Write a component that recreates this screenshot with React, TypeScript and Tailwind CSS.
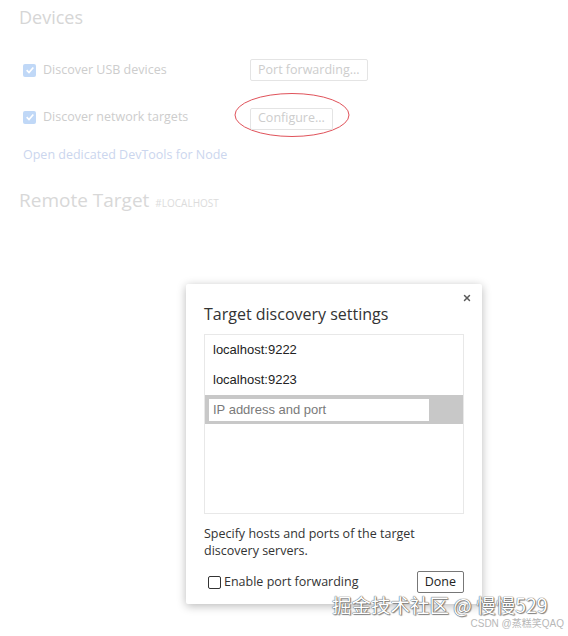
import { X } from 'lucide-react'

const seg = { fontFamily: '"Open Sans", "Noto Sans", sans-serif' }
const arial = { fontFamily: '"Liberation Sans", Arial, sans-serif' }

function FadedCheck() {
    return (
        <span className="w-[13px] h-[13px] rounded-[2px] bg-[#c0d8f7] flex items-center justify-center shrink-0">
            <svg viewBox="0 0 12 12" className="w-[10px] h-[10px]">
                <path d="M2 6.2 L4.8 9 L10 3" fill="none" stroke="#fff" strokeWidth="2" />
            </svg>
        </span>
    )
}

export default function App() {
    return (
        <div className="relative w-[568px] h-[636px] bg-white overflow-hidden" style={seg}>
            {/* faded page behind the dialog */}
            <div className="px-[19px] pt-[3px]">
                <h1 className="text-[18px] text-[#d6d6d6] leading-[28px]">Devices</h1>

                <div className="mt-[27px] flex items-center h-[24px]">
                    <div className="w-[231px] flex items-center gap-[7px] pl-[4px]">
                        <FadedCheck />
                        <span className="text-[12.5px] text-[#cdcdcd]">Discover USB devices</span>
                    </div>
                    <button className="h-[22px] px-[7px] border border-[#e4e4e4] rounded-[2px] text-[12.5px] text-[#cdcdcd] bg-white">
                        Port forwarding...
                    </button>
                </div>

                <div className="mt-[23px] flex items-center h-[24px]">
                    <div className="w-[231px] flex items-center gap-[7px] pl-[4px]">
                        <FadedCheck />
                        <span className="text-[12.5px] text-[#cdcdcd]">Discover network targets</span>
                    </div>
                    <div className="relative">
                        <svg className="absolute left-[-16px] top-[-12px]" width="116" height="46" viewBox="0 0 116 46">
                            <ellipse cx="58" cy="23" rx="57" ry="21.5" fill="none" stroke="#e0525a" strokeWidth="1" />
                        </svg>
                        <button className="relative h-[22px] px-[7px] border border-[#e4e4e4] rounded-[2px] text-[12.5px] text-[#cdcdcd] bg-white">
                            Configure...
                        </button>
                    </div>
                </div>

                <div className="mt-[17px] pl-[4px] text-[12.5px] text-[#cbd6ee]">Open dedicated DevTools for Node</div>

                <div className="mt-[21px] flex items-baseline gap-[6px]">
                    <span className="text-[19px] text-[#d8d8d8]">Remote Target</span>
                    <span className="text-[10px] text-[#dcdcdc] uppercase">#localhost</span>
                </div>
            </div>

            {/* dialog */}
            <div className="absolute left-[186px] top-[284px] w-[296px] h-[320px] bg-white rounded-[2px] shadow-[0_2px_10px_rgba(0,0,0,0.28)] px-[18px] pt-[18px]">
                <X className="absolute right-[10px] top-[9px] w-[10px] h-[10px] text-[#5a5a5a]" strokeWidth={3.5} />
                <h2 className="text-[16px] text-[#333] leading-[24px]">Target discovery settings</h2>

                <div className="mt-[8px] h-[180px] border border-[#e8e8e8]" style={arial}>
                    <div className="h-[30px] flex items-center px-[8px] text-[13px] text-[#222]">localhost:9222</div>
                    <div className="h-[30px] flex items-center px-[8px] text-[13px] text-[#222]">localhost:9223</div>
                    <div className="h-[29px] bg-[#c8c8c8] flex items-center px-[4px]">
                        <input
                            placeholder="IP address and port"
                            className="w-[220px] h-[22px] bg-white px-[4px] text-[13px] text-[#222] placeholder:text-[#7a7a7a] outline-none"
                            style={arial}
                        />
                    </div>
                </div>

                <p className="mt-[11px] text-[12.5px] text-[#333] leading-[17px]">
                    Specify hosts and ports of the target discovery servers.
                </p>

                <div className="mt-[12px] flex items-center justify-between">
                    <label className="flex items-center gap-[3px] pl-[4px] text-[12.5px] text-[#333]">
                        <span className="w-[13px] h-[13px] border border-[#333] rounded-[2px] bg-white" />
                        Enable port forwarding
                    </label>
                    <button className="h-[22px] px-[7px] border border-[#777] rounded-[2px] text-[12.5px] text-[#222] bg-white">
                        Done
                    </button>
                </div>
            </div>

            {/* watermarks */}
            <div
                className="absolute left-[332px] top-[593px] text-[19.5px] text-white leading-[24px]"
                style={{ fontFamily: '"Noto Sans CJK SC", sans-serif', textShadow: '0 0 1px #555, 0 0 1px #555, 1px 1px 1px #888' }}
            >
                掘金技术社区 @ 慢慢529
            </div>
            <div
                className="absolute right-[4px] top-[617px] text-[10px] text-[#b8b8b8] leading-[14px]"
                style={{ fontFamily: '"Liberation Sans", "Noto Sans CJK SC", sans-serif' }}
            >
                CSDN @蒸糕笑QAQ
            </div>
        </div>
    )
}
